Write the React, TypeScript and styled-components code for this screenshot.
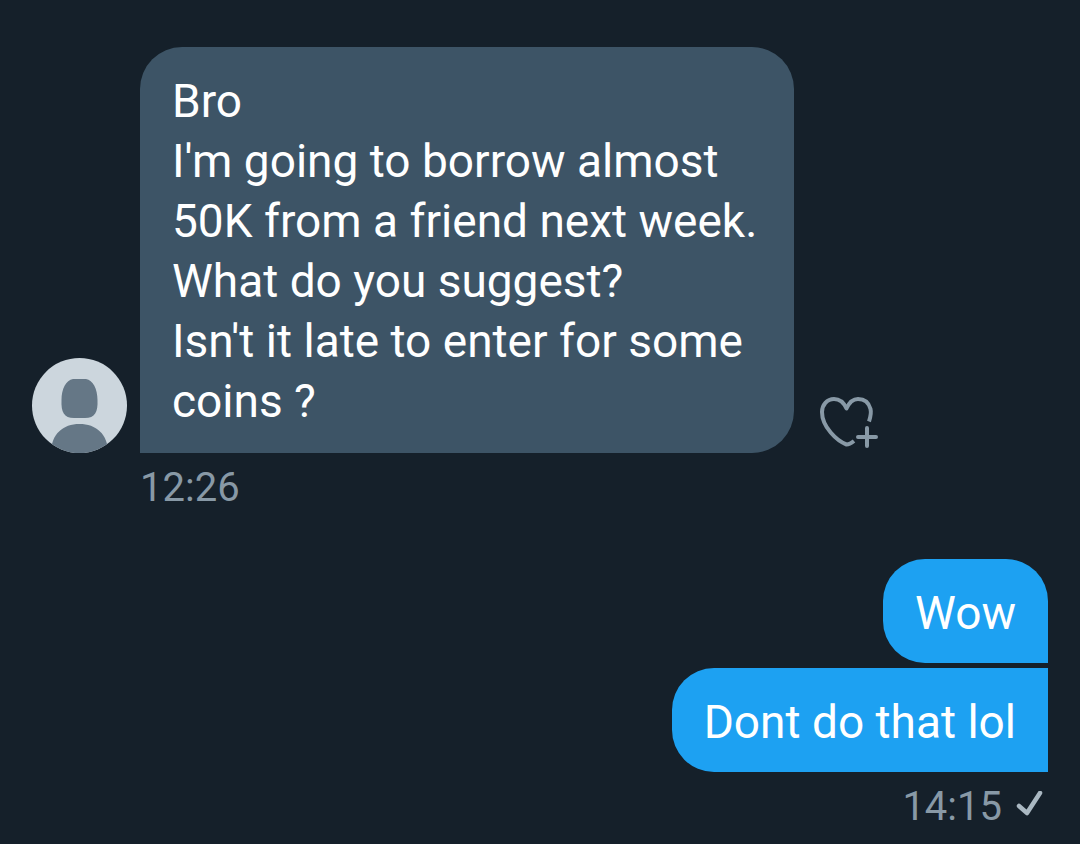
import React from "react";
import styled, { createGlobalStyle, css } from "styled-components";

const GlobalStyle = createGlobalStyle`
  *, *::before, *::after { box-sizing: border-box; }
  body { margin: 0; background: #15202a; }
`;

const Conversation = styled.main`
  display: flex;
  flex-direction: column;
  gap: 42px;
  min-height: 100vh;
  padding: 47px 32px 8px;
  border-bottom: 3px solid #10161f;
  background: #15202a;
  font-family: Roboto, "Liberation Sans", sans-serif;
`;

const Group = styled.section<{ $own?: boolean }>`
  display: flex;
  flex-direction: column;
  align-items: ${(p) => (p.$own ? "flex-end" : "flex-start")};
  gap: 5px;
`;

const MessageRow = styled.div`
  display: flex;
  align-items: flex-end;
  max-width: 100%;
`;

const Avatar = styled.svg`
  flex: none;
  width: 95px;
  height: 95px;
  margin-right: 13px;
`;

const Bubble = styled.p<{ $own?: boolean; $follows?: boolean }>`
  margin: 0;
  font-size: 46px;
  line-height: 60px;
  color: #fff;
  white-space: pre-line;
  ${(p) =>
    p.$own
      ? css`
          padding: 24px 32px 20px;
          background: #1da1f2;
          border-radius: 42px ${p.$follows ? "0" : "42px"} 0 42px;
        `
      : css`
          flex: 0 1 654px;
          padding: 24px 32px 22px;
          background: #3d5466;
          border-radius: 42px 42px 42px 0;
        `}
`;

const ReactButton = styled.button`
  flex: none;
  display: block;
  margin-left: 24px;
  padding: 0;
  border: 0;
  background: none;
  color: #8899a6;
  cursor: pointer;
  svg { display: block; }
`;

const Meta = styled.div<{ $own?: boolean }>`
  display: flex;
  align-items: center;
  gap: 14px;
  padding: ${(p) => (p.$own ? "1px 4px 0 0" : "1px 0 0 108px")};
  font-size: 40px;
  line-height: 58px;
  color: #8899a6;
`;

const SentMark = styled.svg`
  width: 28px;
  height: 28px;
  margin-bottom: 4px;
`;

export default function App() {
  return (
    <>
      <GlobalStyle />
      <Conversation>
        <Group>
          <MessageRow>
            <Avatar viewBox="0 0 95 95" role="img" aria-label="Profile picture">
              <defs>
                <clipPath id="avatar-circle">
                  <circle cx="47.5" cy="47.5" r="47.5" />
                </clipPath>
              </defs>
              <g clipPath="url(#avatar-circle)">
                <rect width="95" height="95" fill="#ccd6dd" />
                <path
                  fill="#657786"
                  d="M41 21H54C61 22 65.500 31 65.500 42C66 54 63 60 53 60H42C32 60 29 54 29.500 42C29.500 31 34 22 41 21Z"
                />
                <path fill="#657786" d="M19 95C19 76 31 66 47.500 66S76 76 76 95Z" />
              </g>
            </Avatar>
            <Bubble>
              {"Bro\nI'm going to borrow almost 50K from a friend next week.\nWhat do you suggest?\nIsn't it late to enter for some coins ?"}
            </Bubble>
            <ReactButton type="button" aria-label="Add reaction">
              <svg
                width="62"
                height="60"
                viewBox="0 0 62 60"
                fill="none"
                stroke="currentColor"
                strokeWidth="4"
                strokeLinecap="butt"
                strokeLinejoin="round"
              >
                <path d="M51 28.500C52.500 24 53.500 20 52.500 16C50.500 8.500 45 6 40 6C34.500 6 31 10 28.500 15.500C26 10 21.500 6 16 6C9 6 4 12 4 19C4 34 19 48 28.500 51.500C31 51.500 33.500 50 36 48" />
                <path strokeLinecap="round" d="M49 35V53M40 44H58" />
              </svg>
            </ReactButton>
          </MessageRow>
          <Meta>
            <time>12:26</time>
          </Meta>
        </Group>
        <Group $own>
          <Bubble $own>Wow</Bubble>
          <Bubble $own $follows>
            Dont do that lol
          </Bubble>
          <Meta $own>
            <time>14:15</time>
            <SentMark
              viewBox="0 0 28 28"
              fill="none"
              stroke="#aab8c2"
              strokeWidth="4.5"
              strokeLinecap="round"
              strokeLinejoin="round"
              role="img"
              aria-label="Sent"
            >
              <path d="M3 15L11 22L24 2" />
            </SentMark>
          </Meta>
        </Group>
      </Conversation>
    </>
  );
}
